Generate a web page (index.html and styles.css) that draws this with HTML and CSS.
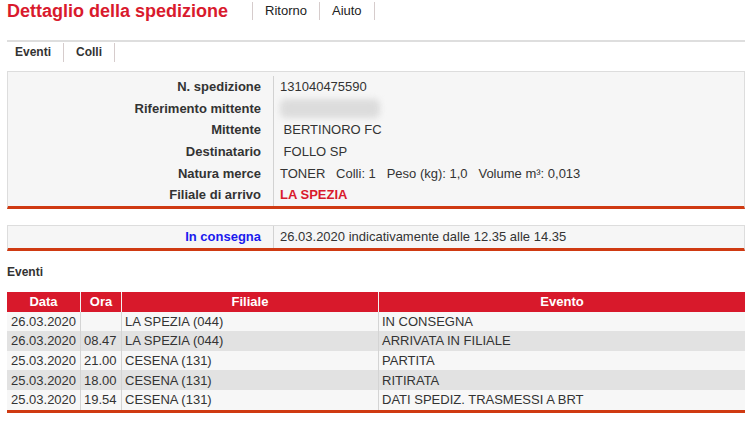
FILE: index.html
```html
<!DOCTYPE html>
<html lang="it">
<head>
<meta charset="utf-8">
<title>Dettaglio della spedizione</title>
<link rel="stylesheet" href="styles.css">
</head>
<body>
<div class="page">
  <header class="topbar">
    <h1 class="title">Dettaglio della spedizione</h1>
    <nav class="tabs">
      <span class="tab">Ritorno</span><span class="tab">Aiuto</span>
    </nav>
  </header>

  <nav class="subtabs">
    <span class="subtab">Eventi</span><span class="subtab">Colli</span>
  </nav>

  <section class="box info">
    <div class="label">N. spedizione</div><div class="value">131040475590</div>
    <div class="label">Riferimento mittente</div><div class="value"><span class="blurred"></span></div>
    <div class="label">Mittente</div><div class="value pre"> BERTINORO FC</div>
    <div class="label">Destinatario</div><div class="value pre"> FOLLO SP</div>
    <div class="label">Natura merce</div><div class="value pre">TONER   Colli: 1   Peso (kg): 1,0   Volume m³: 0,013</div>
    <div class="label">Filiale di arrivo</div><div class="value red">LA SPEZIA</div>
  </section>

  <section class="box status">
    <div class="label blue">In consegna</div><div class="value">26.03.2020 indicativamente dalle 12.35 alle 14.35</div>
  </section>

  <h2 class="heading">Eventi</h2>

  <table class="events">
    <thead>
      <tr><th class="c-data">Data</th><th class="c-ora">Ora</th><th class="c-fil">Filiale</th><th class="c-ev">Evento</th></tr>
    </thead>
    <tbody>
      <tr><td>26.03.2020</td><td></td><td>LA SPEZIA (044)</td><td>IN CONSEGNA</td></tr>
      <tr><td>26.03.2020</td><td>08.47</td><td>LA SPEZIA (044)</td><td>ARRIVATA IN FILIALE</td></tr>
      <tr><td>25.03.2020</td><td>21.00</td><td>CESENA (131)</td><td>PARTITA</td></tr>
      <tr><td>25.03.2020</td><td>18.00</td><td>CESENA (131)</td><td>RITIRATA</td></tr>
      <tr><td>25.03.2020</td><td>19.54</td><td>CESENA (131)</td><td>DATI SPEDIZ. TRASMESSI A BRT</td></tr>
    </tbody>
  </table>
</div>
</body>
</html>
```

FILE: styles.css
```css
* { box-sizing: border-box; }
html, body { margin: 0; padding: 0; background: #fff; }
body {
  font-family: "Liberation Sans", Arial, sans-serif;
  font-size: 13px;
  color: #333;
}
.page {
  width: 745px;
  padding-left: 7px;
}

/* top bar */
.topbar {
  display: flex;
  align-items: flex-start;
  height: 42px;
  border-bottom: 2px solid #dedede;
}
.title {
  margin: 0 24px 0 0;
  font-size: 18px;
  line-height: 22px;
  font-weight: bold;
  color: #d91a2d;
}
.tabs {
  display: flex;
  margin-top: 2px;
  border-left: 1px solid #d6cccc;
}
.tab {
  height: 18px;
  line-height: 18px;
  padding: 0 12px;
  border-right: 1px solid #d6cccc;
  color: #222;
}

/* sub tabs */
.subtabs {
  display: flex;
  padding-top: 1px;
  height: 20px;
}
.subtab {
  height: 19px;
  line-height: 19px;
  padding: 0 12px;
  font-size: 12px;
  font-weight: bold;
  color: #333;
  border-right: 1px solid #d6cccc;
}
.subtab:first-child { padding-left: 8px; }

/* boxes */
.box {
  display: grid;
  grid-template-columns: 265px 1fr;
  background: #f6f6f6;
  border: 1px solid #dddddd;
  border-bottom: 3px solid #cf3a12;
}
.info {
  margin-top: 9px;
  padding-top: 4px;
  grid-auto-rows: 21.6px;
}
.status {
  margin-top: 16px;
  grid-auto-rows: 22px;
}
.label {
  text-align: right;
  padding-right: 12px;
  font-weight: bold;
  display: flex;
  align-items: center;
  justify-content: flex-end;
}
.value {
  border-left: 1px solid #d2d2d2;
  padding-left: 6px;
  display: flex;
  align-items: center;
}
.pre { white-space: pre; }
.red { color: #d91a2d; font-weight: bold; }
.blue { color: #1a1aee; }
.blurred {
  display: inline-block;
  width: 100px;
  height: 19px;
  margin-left: 0;
  background: #dcdcdc;
  border-radius: 6px;
  filter: blur(3px);
}

.heading {
  margin: 13px 0 0;
  font-size: 12px;
  line-height: 16px;
  font-weight: bold;
  color: #333;
}

/* events table */
.events {
  margin-top: 12px;
  width: 738px;
  border-collapse: separate;
  border-spacing: 0;
  table-layout: fixed;
  border-bottom: 3px solid #cf3a12;
}
.events th {
  height: 20px;
  padding: 0;
  background: #d8192b;
  color: #fff;
  font-weight: bold;
  font-size: 13px;
  text-align: center;
  border-left: 1px solid #f2f2f2;
}
.events th:first-child { border-left: none; }
.c-data { width: 73px; }
.c-ora { width: 41px; }
.c-fil { width: 257px; }
.events td {
  height: 19.6px;
  padding: 0 0 0 3px;
  white-space: nowrap;
  border-left: 1px solid #d4d4d4;
}
.events td:first-child { border-left: none; padding-left: 4px; }
.events tbody tr:nth-child(odd) td { background: #f7f7f7; }
.events tbody tr:nth-child(even) td { background: #e2e2e2; }
```
